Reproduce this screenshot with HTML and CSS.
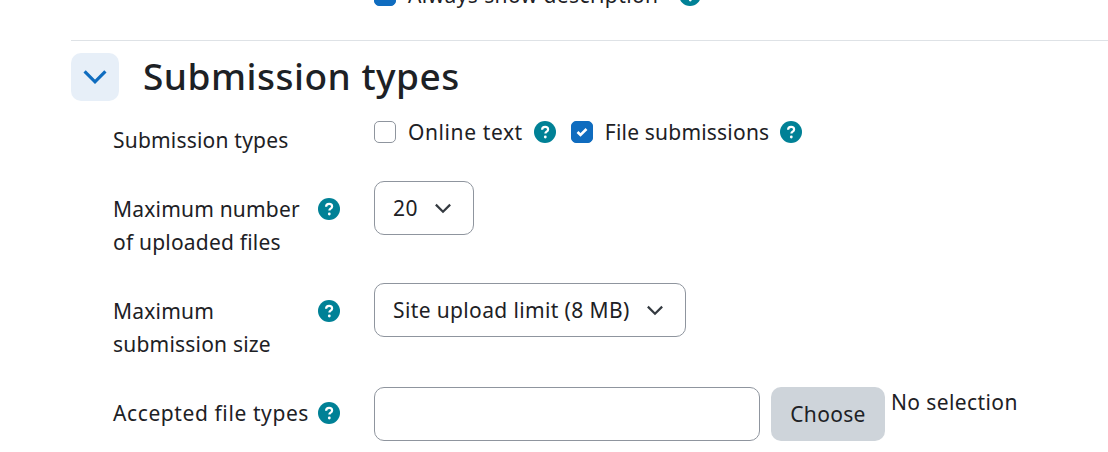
FILE: index.html
```html
<!DOCTYPE html>
<html lang="en">
<head>
<meta charset="utf-8">
<title>Submission types</title>
<link rel="stylesheet" href="styles.css">
</head>
<body>
<svg class="defs" width="0" height="0" aria-hidden="true">
  <symbol id="help" viewBox="0 0 22 22">
    <circle cx="11" cy="11" r="11" fill="#008196"/>
    <path d="M8.1 8.7c0-1.7 1.3-2.8 3-2.8s3 1 3 2.5c0 2.300-2.700 2.300-2.700 4" fill="none" stroke="#fff" stroke-width="2.200"/>
    <circle cx="11.300" cy="16" r="1.400" fill="#fff"/>
  </symbol>
  <symbol id="caret" viewBox="0 0 16 10">
    <path d="M1.500 1.500 8 8l6.500-6.500" fill="none" stroke="currentColor" stroke-width="2"/>
  </symbol>
</svg>
<main class="page">
  <div class="prev-row">
    <span class="check checked"></span>
    <span class="check-label always">Always show description</span>
    <svg class="help"><use href="#help"/></svg>
  </div>
  <section class="section">
    <header class="section-head">
      <button class="toggle" type="button" aria-label="Collapse"><svg class="toggle-icon"><use href="#caret"/></svg></button>
      <h3 class="title">Submission types</h3>
    </header>
    <div class="row row-types">
      <div class="label-cell"><span class="label">Submission types</span></div>
      <div class="checks">
        <span class="check"></span>
        <span class="check-label online">Online text</span>
        <svg class="help"><use href="#help"/></svg>
        <span class="check checked second"><svg class="tick" viewBox="0 0 12 10"><path d="M1.500 5 4.500 8 10.500 2" fill="none" stroke="#fff" stroke-width="2.600"/></svg></span>
        <span class="check-label">File submissions</span>
        <svg class="help"><use href="#help"/></svg>
      </div>
    </div>
    <div class="row row-files">
      <div class="label-cell"><span class="label">Maximum number of uploaded files</span><svg class="help"><use href="#help"/></svg></div>
      <div class="select"><span>20</span><svg class="select-icon"><use href="#caret"/></svg></div>
    </div>
    <div class="row row-size">
      <div class="label-cell"><span class="label">Maximum submission size</span><svg class="help"><use href="#help"/></svg></div>
      <div class="select"><span class="select-text">Site upload limit (8 MB)</span><svg class="select-icon"><use href="#caret"/></svg></div>
    </div>
    <div class="row row-accepted">
      <div class="label-cell"><span class="label accepted">Accepted file types</span><svg class="help"><use href="#help"/></svg></div>
      <div class="file-controls">
        <input class="text-input" type="text" aria-label="Accepted file types">
        <button class="choose" type="button">Choose</button>
        <span class="no-selection">No selection</span>
      </div>
    </div>
  </section>
</main>
</body>
</html>
```
FILE: styles.css
```css
html, body {
  margin: 0;
  height: 452px;
  overflow: hidden;
  background: #fff;
}
body {
  font-family: "Noto Sans", "Open Sans", sans-serif;
  font-size: 21px;
  line-height: 33px;
  color: #1d2125;
}
.defs { display: block; height: 0; }
.page { padding-left: 71px; margin-top: -19px; }

.prev-row {
  display: flex;
  align-items: center;
  height: 28px;
  padding-left: 303px;
  margin-bottom: 31px;
}
.section { border-top: 1px solid #dee2e6; padding-top: 12px; }
.section-head { display: flex; align-items: center; gap: 24px; height: 48px; }
.toggle {
  width: 48px;
  height: 48px;
  padding: 0;
  border: 0;
  border-radius: 10px;
  background: #e7eff8;
  color: #0f6cbf;
  display: flex;
  align-items: center;
  justify-content: center;
}
.toggle-icon { width: 26px; height: 16px; }
.title {
  margin: 0 0 2px;
  font-size: 37px;
  line-height: 46px;
  font-weight: 500;
  letter-spacing: 0.5px;
}
.row { display: flex; padding-left: 42px; }
.label-cell {
  width: 261px;
  flex: none;
  display: flex;
  align-items: flex-start;
  justify-content: space-between;
  box-sizing: border-box;
  padding-right: 34px;
}
.label { display: block; width: 195px; letter-spacing: 0.2px; }
.label.accepted { width: auto; letter-spacing: 0.6px; }
.label-cell .help { margin-top: 5px; }

.row-types { margin-top: 23px; height: 58px; }
.checks { display: flex; align-items: flex-start; height: 24px; margin-top: -3px; }
.checks .help { margin-left: 11px; }
.row-files { height: 102px; }
.row-files .label-cell { padding-top: 11px; }
.row-size { height: 104px; }
.row-size .label-cell { padding-top: 11px; }
.row-accepted .label-cell { padding-top: 9px; }

.check {
  width: 22px;
  height: 22px;
  box-sizing: border-box;
  border: 1px solid #8f959e;
  border-radius: 5px;
  background: #fff;
  flex: none;
  display: flex;
  align-items: center;
  justify-content: center;
}
.check.checked { background: #0f6cbf; border-color: #0f6cbf; }
.check.second { margin-left: 15px; }
.tick { width: 12px; height: 10px; }
.check-label { margin-left: 12px; line-height: 22px; letter-spacing: 0.2px; }
.check-label.online { letter-spacing: 0.6px; }
.check-label.always { letter-spacing: 0.4px; }
.help { width: 22px; height: 22px; flex: none; display: block; }
.prev-row .help { margin-left: 21px; }

.select {
  display: inline-flex;
  align-items: center;
  align-self: flex-start;
  height: 54px;
  margin-top: -1px;
  box-sizing: border-box;
  border: 1px solid #8f959e;
  border-radius: 10px;
  padding: 0 21px 0 18px;
  background: #fff;
  letter-spacing: 0.5px;
}
.select-text { letter-spacing: 0.37px; }
.select-icon { width: 18px; height: 11px; margin-left: 16px; color: #343a40; }

.file-controls { display: flex; align-items: flex-start; margin-top: -1px; }
.text-input {
  width: 386px;
  height: 54px;
  box-sizing: border-box;
  border: 1px solid #8f959e;
  border-radius: 10px;
  background: #fff;
  padding: 0 18px;
  font: inherit;
}
.choose {
  margin-left: 11px;
  width: 114px;
  height: 54px;
  border: 0;
  border-radius: 10px;
  background: #ced4da;
  color: #1d2125;
  font: inherit;
  letter-spacing: 0.33px;
  padding: 0;
}
.no-selection { margin-left: 6px; line-height: 30px; letter-spacing: 0.4px; }
```
